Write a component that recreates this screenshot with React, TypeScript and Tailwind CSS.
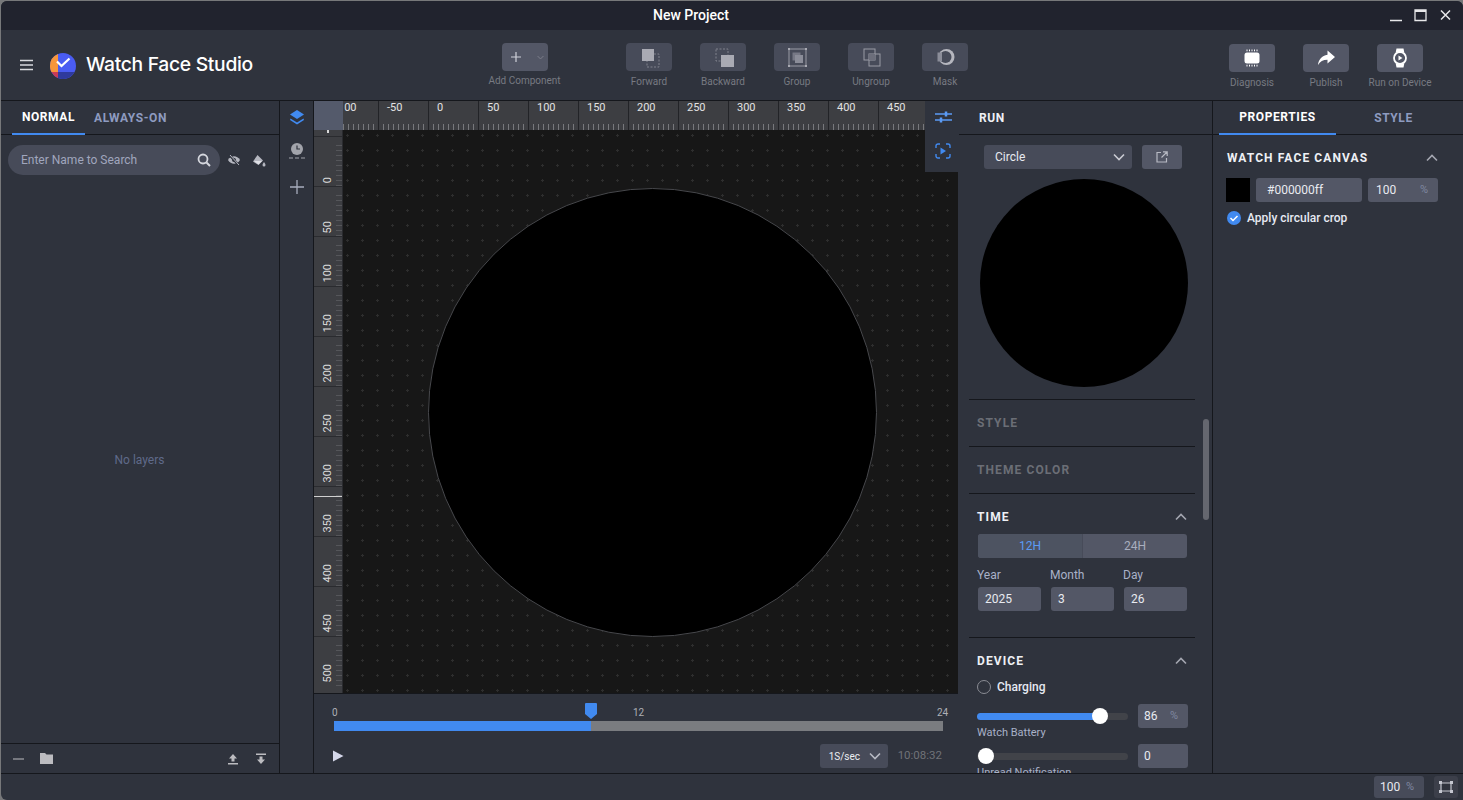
import React from "react";

const Chevron = ({ up = false, cls = "" }: { up?: boolean; cls?: string }) => (
  <svg width="12" height="8" viewBox="0 0 12 8" fill="none" className={cls}>
    <path d={up ? "M1 6.5 6 1.5l5 5" : "M1 1.5l5 5 5-5"} stroke="currentColor" strokeWidth="1.6" />
  </svg>
);

const icons: Record<string, React.ReactNode> = {
  plus: <path d="M11 6v10M6 11h10" stroke="#d0d2da" strokeWidth="1.2" />,
  forward: (
    <>
      <rect x="9" y="8" width="12" height="13" fill="none" stroke="#80828d" strokeWidth="1" strokeDasharray="2 1.5" />
      <rect x="4" y="3" width="12" height="12" fill="#a9aab3" />
    </>
  ),
  backward: (
    <>
      <rect x="4" y="3" width="12" height="12" fill="none" stroke="#80828d" strokeWidth="1" strokeDasharray="2 1.5" />
      <rect x="9" y="9" width="13" height="12" fill="#a9aab3" />
    </>
  ),
  group: (
    <>
      <rect x="3" y="3" width="17" height="17" fill="none" stroke="#9a9ba5" strokeWidth="1" />
      <rect x="6.5" y="6.5" width="8" height="8" fill="#767885" />
      <rect x="9" y="9" width="8" height="8" fill="#8b8d99" />
      {[[3, 3], [20, 3], [3, 20], [20, 20]].map(([x, y]) => (
        <rect key={`${x}${y}`} x={x - 1} y={y - 1} width="2" height="2" fill="#a9aab3" />
      ))}
    </>
  ),
  ungroup: (
    <>
      <rect x="4" y="3" width="11" height="11" fill="none" stroke="#9a9ba5" strokeWidth="1" />
      <rect x="9" y="8" width="11" height="12" fill="none" stroke="#9a9ba5" strokeWidth="1" />
      <rect x="9" y="8" width="6" height="6" fill="#6c6e7b" />
    </>
  ),
  mask: (
    <>
      <circle cx="12.500" cy="11" r="8" fill="#b5b6be" />
      <circle cx="11.500" cy="11" r="6" fill="#474b59" />
      <rect x="3.500" y="6.500" width="4.500" height="9" fill="#8b8d99" />
    </>
  ),
  chip: (
    <>
      <rect x="3.500" y="5.500" width="15" height="11" rx="2.500" fill="#fff" />
      <path d="M6 2.500v1.800M8.500 2.500v1.800M11 2.500v1.800M13.500 2.500v1.800M16 2.500v1.800M6 17.700v1.800M8.500 17.700v1.800M11 17.700v1.800M13.500 17.700v1.800M16 17.700v1.800" stroke="#fff" strokeWidth="1" />
    </>
  ),
  share: <path d="M12.500 3.500 20 10l-7.500 6.500V12.700C8 12.700 5 14.300 3 18c.6-5.400 3.700-9.500 9.500-10.300z" fill="#fff" />,
  watch: (
    <>
      <path d="M7.500 1.500h7l.8 4h-8.600zM7.500 20.500h7l.8-4h-8.600z" fill="#fff" />
      <circle cx="11" cy="11" r="6" fill="#535766" stroke="#fff" strokeWidth="1.800" />
      <path d="M9.500 8.500 13.500 11l-4 2.500z" fill="#fff" />
    </>
  ),
};

const Tool = ({ icon, label, wide, dim = true }: { icon: string; label: string; wide?: boolean; dim?: boolean }) => (
  <div className="w-[74px] flex flex-col items-center">
    <div className={`w-[46px] h-[28px] rounded-[4px] flex items-center ${wide ? "bg-[#535766] justify-between pl-[3px] pr-[4px]" : dim ? "bg-[#474b59] justify-center" : "bg-[#535766] justify-center"}`}>
      <svg width="22" height="22" viewBox="0 0 22 22">{icons[icon]}</svg>
      {wide && <Chevron cls="w-[7px] h-[5px] text-[#7f818d]" />}
    </div>
    <div className={`${wide ? "mt-[4px]" : "mt-[5px]"} text-[10px] leading-[12px] whitespace-nowrap text-[#777a82]`}>{label}</div>
  </div>
);

const Head = ({ children, dim, chevron, cls = "" }: { children: string; dim?: boolean; chevron?: boolean; cls?: string }) => (
  <div className={`flex items-center justify-between ${cls}`}>
    <span className={`text-[12px] leading-[14px] font-bold tracking-[1.1px] ${dim ? "text-[#6b6e76]" : "text-[#eef0f5]"}`}>{children}</span>
    {chevron && <Chevron up cls="text-[#a4a6b0] mr-[3px]" />}
  </div>
);

const Field = ({ children, cls = "", unit }: { children: string; cls?: string; unit?: boolean }) => (
  <div className={`h-[24px] rounded-[3px] bg-[#535766] flex items-center justify-between text-[12px] text-[#e8eaf0] ${cls}`}>
    <span>{children}</span>
    {unit && <span className="text-[#7f87a0] text-[11px]">%</span>}
  </div>
);

const Slider = ({ pct, knob, value, unit }: { pct: number; knob: number; value: string; unit?: boolean }) => (
  <div className="flex items-center pr-[7px]">
    <div className="relative w-[151px] h-[7px] rounded-full bg-[#414349]">
      <div className="h-full rounded-full bg-[#418af0]" style={{ width: `${pct}px` }} />
      <div className="absolute top-[-4.500px] w-[16px] h-[16px] rounded-full bg-white" style={{ left: `${knob}px` }} />
    </div>
    <Field cls="ml-[10px] w-[50px] pl-[6px] pr-[10px]" unit={unit}>{value}</Field>
  </div>
);

const HRuler = () => {
  const labels = ["100", "-50", "0", "50", "100", "150", "200", "250", "300", "350", "400", "450"];
  return (
    <div className="h-[29px] flex-1 overflow-hidden bg-[#3d3e42] flex">
      <div className="flex -ml-[15px] shrink-0">
        {labels.map((l, i) => (
          <div key={i} className="w-[50px] h-[29px] shrink-0 border-l border-[#222327] flex flex-col justify-between">
            <span className={`${i === 0 ? "pl-[9px]" : "pl-[8px]"} text-[11px] leading-[12px] mt-[1px] text-[#e2e2e2]`}>{l}</span>
            <div className="ml-[4px] h-[6px] bg-[repeating-linear-gradient(90deg,#77787c_0,#77787c_1px,transparent_1px,transparent_5px)]" />
          </div>
        ))}
      </div>
    </div>
  );
};

const VRuler = () => {
  const labels = ["0", "50", "100", "150", "200", "250", "300", "350", "400", "450", "500"];
  return (
    <div className="relative w-[29px] shrink-0 overflow-hidden bg-[#3d3e42] border-r border-[#2a2b2f]">
      <div className="absolute left-[13px] top-0 w-[2px] h-[3px] bg-[#d8d8d8]" />
      <div className="h-[6px]" />
      {labels.map((l) => (
        <div key={l} className="h-[50px] border-t border-[#2a2b2f] flex justify-between">
          <div className="flex-1 flex items-end justify-center pb-[3px] pl-[6px]">
            <span className="text-[11px] leading-[12px] text-[#dcdcdc] [writing-mode:vertical-rl] rotate-180">{l}</span>
          </div>
          <div className="w-[6px] mt-[4px] mb-0 bg-[repeating-linear-gradient(0deg,#55565a_0,#55565a_1px,transparent_1px,transparent_5px)]" />
        </div>
      ))}
      <div className="absolute left-0 right-0 top-[366px] h-px bg-[#d0d0d0]" />
    </div>
  );
};

const sectionLine = "shrink-0 ml-[11px] mr-[17px] border-t border-[#15171c] pl-[8px] pt-[16px]";

export default function App() {
  return (
    <div className="w-[1463px] h-[800px] bg-[#77787a] pt-px pl-px overflow-hidden [font-family:Roboto,'Liberation_Sans',sans-serif]">
      <div className="w-[1462px] h-[799px] rounded-t-[6px] rounded-bl-[6px] overflow-hidden flex flex-col bg-[#2f333d] text-[#e8eaf0]">
        {/* Title bar */}
        <div className="relative h-[29px] shrink-0 bg-[#21232e] flex items-center justify-center pr-[82px]">
          <span className="text-[14px] font-medium text-white">New Project</span>
          <div className="absolute right-[11px] top-[8px] flex items-center gap-[12px] text-[#e8e8ea]">
            <svg width="13" height="13" viewBox="0 0 13 13"><path d="M1 11.500h12" stroke="currentColor" strokeWidth="1.500" /></svg>
            <svg width="13" height="13" viewBox="0 0 13 13" fill="none"><path d="M1 1h11v10.500H1z" stroke="currentColor" strokeWidth="1.300" /><path d="M1 2h11" stroke="currentColor" strokeWidth="2" /></svg>
            <svg width="13" height="13" viewBox="0 0 13 13" fill="none"><path d="m2 1.500 9 9M11 1.500l-9 9" stroke="currentColor" strokeWidth="1.500" /></svg>
          </div>
        </div>

        {/* Toolbar */}
        <div className="h-[71px] shrink-0 flex items-start border-b border-[#15171c]">
          <div className="w-[487px] shrink-0 h-full flex items-center pl-[19px]">
            <svg width="13" height="12" viewBox="0 0 13 12" className="-mt-[1px]"><path d="M0 1.500h13M0 6h13M0 10.500h13" stroke="#d8d9de" strokeWidth="1.500" /></svg>
            <svg width="26" height="26" viewBox="0 0 26 26" className="ml-[17px] mt-[1px]">
              <circle cx="13" cy="13" r="13" fill="#4a5cf2" />
              <path d="M8 .9A13 13 0 0 0 0 13c0 2.200.6 4.300 1.500 6H8z" fill="#f7963c" />
              <path d="M1.500 19A13 13 0 0 0 8 25l0-6z" fill="#c93b55" />
              <path d="M8 19h16.500A13 13 0 0 1 8 25z" fill="#2f3a9c" />
              <path d="M7 8.500 11.500 13 19.500 5.500" stroke="#fff" strokeWidth="2.200" fill="none" />
            </svg>
            <span className="ml-[10px] -mt-[2px] text-[19.300px] font-medium text-white whitespace-nowrap [font-family:Inter,Roboto,sans-serif] tracking-[-0.3px]">Watch Face Studio</span>
          </div>
          <div className="pt-[13px] flex w-[73px] justify-center"><Tool icon="plus" label="Add Component" wide /></div>
          <div className="pt-[13px] flex ml-[51px]">
            <Tool icon="forward" label="Forward" />
            <Tool icon="backward" label="Backward" />
            <Tool icon="group" label="Group" />
            <Tool icon="ungroup" label="Ungroup" />
            <Tool icon="mask" label="Mask" />
          </div>
          <div className="pt-[14px] flex ml-auto mr-[26px]">
            <Tool icon="chip" label="Diagnosis" dim={false} />
            <Tool icon="share" label="Publish" dim={false} />
            <Tool icon="watch" label="Run on Device" dim={false} />
          </div>
        </div>

        {/* Main */}
        <div className="h-[673px] shrink-0 flex border-b border-[#15171c] overflow-hidden">
          {/* Left panel */}
          <div className="w-[279px] shrink-0 flex flex-col border-r border-[#15171c]">
            <div className="h-[34px] shrink-0 flex pl-[11px] border-b border-[#15171c] text-[12px] font-bold tracking-[0.6px]">
              <div className="w-[73px] h-[34px] border-b-2 border-[#418af0] flex items-center justify-center text-white">NORMAL</div>
              <div className="ml-[9px] h-[33px] flex items-center text-[#8e9bc0]">ALWAYS-ON</div>
            </div>
            <div className="flex items-center pt-[10px] pl-[7px]">
              <div className="w-[212px] h-[30px] rounded-full bg-[#474b59] flex items-center justify-between pl-[13px] pr-[9px]">
                <span className="text-[12px] text-[#a0a6bd]">Enter Name to Search</span>
                <svg width="14" height="14" viewBox="0 0 14 14" fill="none"><circle cx="6" cy="6" r="4.500" stroke="#d5d7de" strokeWidth="1.800" /><path d="m9.500 9.500 3.500 3.500" stroke="#d5d7de" strokeWidth="2" /></svg>
              </div>
              <svg width="14" height="12" viewBox="0 0 14 12" className="ml-[7px]" fill="none"><path d="M1 6c3-5 9-5 12 0-3 5-9 5-12 0z" fill="#b5b7c0" /><circle cx="7" cy="6" r="2" fill="#2f333d" /><path d="m2.500 1 9 10" stroke="#2f333d" strokeWidth="2.500" /><path d="m3 1 9 10" stroke="#b5b7c0" strokeWidth="1" /></svg>
              <svg width="14" height="13" viewBox="0 0 14 13" className="ml-[11px]"><path d="M5.500 1 11 6.500 6.500 11 1 7.500z" fill="#b5b7c0" /><path d="M2 7h8L6.500 10.500z" fill="#e0e1e6" /><path d="M12 8c1 1.500 1.500 2.200 1.500 3a1.500 1.500 0 0 1-3 0c0-.8.500-1.500 1.500-3z" fill="#b5b7c0" /></svg>
            </div>
            <div className="flex-1 flex items-center justify-center text-[12px] text-[#5f6a8a] pt-[1px] pr-[1px]">No layers</div>
            <div className="h-[30px] shrink-0 border-t border-[#15171c] flex items-center pl-[12px] pr-[12px]">
              <svg width="12" height="2" viewBox="0 0 12 2"><path d="M0 1h11" stroke="#8f9096" strokeWidth="1.500" /></svg>
              <svg width="13" height="11" viewBox="0 0 13 11" className="ml-[15px]"><path d="M0 0h5l1.500 1.500H13V11H0z" fill="#bcbcc0" /></svg>
              <svg width="12" height="12" viewBox="0 0 12 12" className="ml-auto"><path d="M6 1 10 5.500H7.500v3h-3v-3H2zM1 10h10v1.500H1z" fill="#bcbcc0" /></svg>
              <svg width="12" height="12" viewBox="0 0 12 12" className="ml-[16px]"><path d="M6 11 10 6.500H7.500v-3h-3v3H2zM1 .5h10V2H1z" fill="#bcbcc0" /></svg>
            </div>
          </div>

          {/* Rail */}
          <div className="w-[34px] shrink-0 flex flex-col items-center pt-[8px] border-r border-[#15171c]">
            <svg width="16" height="16" viewBox="0 0 16 16"><path d="M8 1 15 5.500 8 10 1 5.500z" fill="#418af0" /><path d="M1.500 9.500 8 13.500l6.500-4L15 11l-7 4.500L1 11z" fill="#418af0" /></svg>
            <svg width="18" height="19" viewBox="0 0 18 19" className="mt-[17px]"><circle cx="9" cy="7" r="6" fill="#a2a4ab" /><path d="M9 3.500V7h3" stroke="#2f333d" strokeWidth="1.200" fill="none" /><path d="M1 16h4M7 16h4M13 16h4" stroke="#a2a4ab" strokeWidth="1.200" /></svg>
            <svg width="14" height="14" viewBox="0 0 14 14" className="mt-[19px]"><path d="M7 0v14M0 7h14" stroke="#a8adbd" strokeWidth="1.300" /></svg>
          </div>

          {/* Canvas column */}
          <div className="w-[644px] shrink-0 flex flex-col relative">
            <div className="h-[29px] shrink-0 flex">
              <div className="w-[29px] shrink-0 bg-[#545a6b]" />
              <HRuler />
              <div className="w-[32px] shrink-0" />
            </div>
            <div className="h-[564px] shrink-0 flex border-b border-[#15171c] overflow-hidden">
              <VRuler />
              <div className="flex-1 relative bg-[#171717] bg-[radial-gradient(circle_at_4.500px_5.500px,#2e2e2e_1px,transparent_1.200px)] bg-[size:15px_15px]">
                <div className="absolute left-[85px] top-[58px] w-[449px] h-[449px] rounded-full bg-black border border-[#47484c]" />
              </div>
            </div>
            {/* Floating tools */}
            <div className="absolute right-0 top-0 w-[33px] h-[71px] bg-[#2f333d] flex flex-col items-center pt-[9px] pl-[3px] gap-[19px]">
              <svg width="17" height="14" viewBox="0 0 17 14" fill="none"><path d="M0 4h17M0 10h17" stroke="#5b9bf5" strokeWidth="1.500" /><path d="M11 1.500v5M6 7.500v5" stroke="#5b9bf5" strokeWidth="2.500" /></svg>
              <svg width="16" height="16" viewBox="0 0 16 16" fill="none"><path d="M1 5V3a2 2 0 0 1 2-2h2M11 1h2a2 2 0 0 1 2 2v2M15 11v2a2 2 0 0 1-2 2h-2M5 15H3a2 2 0 0 1-2-2v-2" stroke="#418af0" strokeWidth="1.400" /><path d="M5.500 4.500 11 8l-5.500 3.500z" fill="#418af0" /></svg>
            </div>
            {/* Timeline */}
            <div className="flex-1 relative pl-[20px] pr-[15px]">
              <div className="h-[26px] relative text-[10px] leading-[12px] text-[#aeb0b6]">
                <span className="absolute left-[-2px] top-[13px]">0</span>
                <span className="absolute left-[299px] top-[13px]">12</span>
                <span className="absolute left-[603px] top-[13px]">24</span>
                <svg width="14" height="16" viewBox="0 0 14 16" className="absolute left-[250px] top-[9px]"><path d="M1 0h11a1 1 0 0 1 1 1v10l-6 5-6-5V1a1 1 0 0 1 1-1z" fill="#418af0" /></svg>
              </div>
              <div className="w-[609px] h-[10px] bg-[#7a7c80] mt-[1px]"><div className="w-[257px] h-full bg-[#418af0]" /></div>
              <div className="flex items-center mt-[13px] h-[24px]">
                <svg width="12" height="12" viewBox="0 0 12 12" className="ml-[-2px]"><path d="M1 .5 11.500 6 1 11.500z" fill="#d5d8ea" /></svg>
                <div className="ml-auto w-[68px] h-[24px] rounded-[3px] bg-[#474b59] flex items-center justify-between pl-[9px] pr-[7px] text-[10px] text-[#eceef2]">
                  <span>1S/sec</span>
                  <Chevron cls="text-[#b8bac4]" />
                </div>
                <span className="ml-[10px] mr-px text-[11.500px] text-[#6f7278]">10:08:32</span>
              </div>
            </div>
          </div>

          {/* Run panel */}
          <div className="w-[255px] shrink-0 flex flex-col border-r border-[#15171c] relative">
            <div className="h-[34px] shrink-0 flex items-center pl-[20px] border-b border-[#15171c] ml-[1px] text-[12px] font-bold tracking-[0.6px] text-[#eef0f5]">RUN</div>
            <div className="flex items-center pt-[10px] pl-[26px] shrink-0">
              <div className="w-[148px] h-[24px] rounded-[3px] bg-[#474b59] flex items-center justify-between pl-[11px] pr-[7px] text-[12px] text-[#e8eaf0]">
                <span>Circle</span>
                <Chevron cls="text-[#c9cad2]" />
              </div>
              <div className="ml-[10px] w-[40px] h-[24px] rounded-[3px] bg-[#535766] flex items-center justify-center">
                <svg width="12" height="12" viewBox="0 0 12 12" fill="none"><path d="M5 1.500H1v9.500h9.500V7M7 .8h4.200V5M11 1 5.500 6.500" stroke="#b8bac4" strokeWidth="1.200" /></svg>
              </div>
            </div>
            <div className="w-[208px] h-[208px] rounded-full bg-black mt-[10px] ml-[22px] shrink-0" />
            <div className={`mt-[12px] h-[47px] ${sectionLine}`}><Head dim>STYLE</Head></div>
            <div className={`h-[47px] ${sectionLine}`}><Head dim>THEME COLOR</Head></div>
            <div className={`h-[144px] pr-[8px] ${sectionLine}`}>
              <div className="-mr-[3px]"><Head chevron>TIME</Head></div>
              <div className="mt-[10px] ml-[1px] h-[24px] rounded-[3px] bg-[#535766] flex text-[12px] text-[#a9aebe]">
                <div className="flex-1 flex items-center justify-center border-r border-[#474b59] text-[#5b9bf5] bg-[#4d5361] rounded-l-[3px]">12H</div>
                <div className="flex-1 flex items-center justify-center">24H</div>
              </div>
              <div className="flex gap-[10px] ml-[1px] mt-[10px]">
                {[["Year", "2025"], ["Month", "3"], ["Day", "26"]].map(([a, b]) => (
                  <div key={a} className="w-[63px]">
                    <div className="text-[12px] leading-[14px] text-[#a9b1c8] mb-[5px] -ml-[1px]">{a}</div>
                    <Field cls="pl-[7px]">{b}</Field>
                  </div>
                ))}
              </div>
            </div>
            <div className={sectionLine}>
              <div className="pr-[5px]"><Head chevron>DEVICE</Head></div>
              <div className="flex items-center mt-[12px] h-[14px]">
                <div className="w-[14px] h-[14px] rounded-full border border-[#8a8c94]" />
                <span className="ml-[6px] text-[12px] font-medium text-[#e6e9f2]">Charging</span>
              </div>
              <div className="mt-[10px]"><Slider pct={123} knob={115} value="86" unit /></div>
              <div className="text-[11px] leading-[14px] text-[#a9b1c8] -mt-[2px]">Watch Battery</div>
              <div className="mt-[4px]"><Slider pct={0} knob={1} value="0" /></div>
              <div className="text-[11px] leading-[14px] text-[#a9b1c8] -mt-[2px] whitespace-nowrap">Unread Notification</div>
            </div>
            <div className="absolute left-[245px] top-[318px] w-[6px] h-[101px] rounded-full bg-[#65676f]" />
          </div>

          {/* Right panel */}
          <div className="flex-1 min-w-0 flex flex-col">
            <div className="h-[34px] shrink-0 flex pl-[6px] border-b border-[#15171c] text-[12px] font-bold tracking-[0.6px]">
              <div className="w-[117px] h-[34px] border-b-2 border-[#418af0] flex items-center justify-center text-white">PROPERTIES</div>
              <div className="w-[115px] h-[33px] flex items-center justify-center text-[#8e9bc0]">STYLE</div>
            </div>
            <div className="px-[14px] pt-[16px] pr-[22px]">
              <Head chevron>WATCH FACE CANVAS</Head>
              <div className="flex items-center mt-[13px] -ml-px">
                <div className="w-[24px] h-[24px] bg-black" />
                <Field cls="ml-[6px] w-[106px] pl-[11px]">#000000ff</Field>
                <Field cls="ml-[6px] w-[70px] pl-[8px] pr-[10px]" unit>100</Field>
              </div>
              <div className="flex items-center mt-[7px]">
                <svg width="14" height="14" viewBox="0 0 14 14"><circle cx="7" cy="7" r="7" fill="#418af0" /><path d="m3.500 7 2.500 2.500 4.500-4.500" stroke="#fff" strokeWidth="1.500" fill="none" /></svg>
                <span className="ml-[6px] text-[12px] font-medium text-[#e6e9f2]">Apply circular crop</span>
              </div>
            </div>
          </div>
        </div>

        {/* Status */}
        <div className="flex-1 flex items-center justify-end pr-[5px]">
          <Field cls="w-[50px] !h-[22px] pl-[6px] pr-[10px] !bg-[#474b59]" unit>100</Field>
          <div className="ml-[10px] w-[24px] h-[22px] rounded-[3px] bg-[#3c3f4a] flex items-center justify-center">
            <svg width="14" height="12" viewBox="0 0 14 12" fill="none"><path d="M2 2h10v8H2z" stroke="#c5c7d0" strokeWidth="1.200" fill="#2f333d" /><rect x="0" y="0" width="3" height="3" fill="#c5c7d0" /><rect x="11" y="0" width="3" height="3" fill="#c5c7d0" /><rect x="0" y="9" width="3" height="3" fill="#c5c7d0" /><rect x="11" y="9" width="3" height="3" fill="#c5c7d0" /></svg>
          </div>
        </div>
      </div>
    </div>
  );
}
